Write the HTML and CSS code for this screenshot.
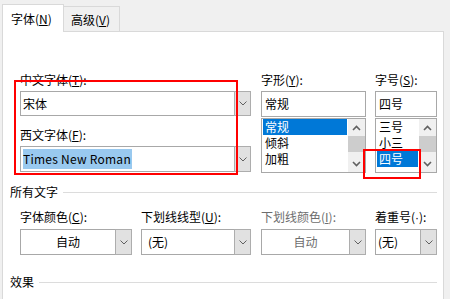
FILE: index.html
```html
<!DOCTYPE html>
<html lang="zh-CN">
<head>
<meta charset="utf-8">
<title>字体</title>
<link rel="stylesheet" href="styles.css">
</head>
<body>
<div class="tabs">
  <div class="tab active">字体(<u>N</u>)</div>
  <div class="tab second">高级(<u>V</u>)</div>
</div>
<div class="panel">
  <div class="font-row">
    <div class="col col-cn">
      <div class="label">中文字体(<u>T</u>):</div>
      <div class="combo">
        <div class="field">宋体</div>
        <div class="btn"><svg width="8" height="5" viewBox="0 0 8 5"><path d="M0.5 0.5 L4 4 L7.5 0.5" fill="none" stroke="#606060" stroke-width="1"/></svg></div>
      </div>
      <div class="label label-gap">西文字体(<u>F</u>):</div>
      <div class="combo combo-tall">
        <div class="field"><span class="hl">Times New Roman</span></div>
        <div class="btn"><svg width="8" height="5" viewBox="0 0 8 5"><path d="M0.5 0.5 L4 4 L7.5 0.5" fill="none" stroke="#606060" stroke-width="1"/></svg></div>
      </div>
    </div>
    <div class="col col-style">
      <div class="label">字形(<u>Y</u>):</div>
      <div class="textbox">常规</div>
      <div class="listbox">
        <div class="items">
          <div class="item selected">常规</div>
          <div class="item">倾斜</div>
          <div class="item">加粗</div>
        </div>
        <div class="scrollbar">
          <div class="sb-arrow"><svg width="9" height="6" viewBox="0 0 9 6"><path d="M1 5 L4.5 1.5 L8 5" fill="none" stroke="#606060" stroke-width="1.6"/></svg></div>
          <div class="sb-track"><div class="sb-thumb"></div></div>
          <div class="sb-arrow"><svg width="9" height="6" viewBox="0 0 9 6"><path d="M1 1 L4.5 4.5 L8 1" fill="none" stroke="#606060" stroke-width="1.6"/></svg></div>
        </div>
      </div>
    </div>
    <div class="col col-size">
      <div class="label">字号(<u>S</u>):</div>
      <div class="textbox">四号</div>
      <div class="listbox">
        <div class="items">
          <div class="item">三号</div>
          <div class="item">小三</div>
          <div class="item selected">四号</div>
        </div>
        <div class="scrollbar">
          <div class="sb-arrow"><svg width="9" height="6" viewBox="0 0 9 6"><path d="M1 5 L4.5 1.5 L8 5" fill="none" stroke="#606060" stroke-width="1.6"/></svg></div>
          <div class="sb-track"><div class="sb-thumb"></div></div>
          <div class="sb-arrow"><svg width="9" height="6" viewBox="0 0 9 6"><path d="M1 1 L4.5 4.5 L8 1" fill="none" stroke="#606060" stroke-width="1.6"/></svg></div>
        </div>
      </div>
    </div>
  </div>

  <div class="section"><span>所有文字</span><div class="rule"></div></div>

  <div class="field-row">
    <div class="col c1">
      <div class="label">字体颜色(<u>C</u>):</div>
      <div class="combo combo-row">
        <div class="field center">自动</div>
        <div class="btn"><svg width="8" height="5" viewBox="0 0 8 5"><path d="M0.5 0.5 L4 4 L7.5 0.5" fill="none" stroke="#606060" stroke-width="1"/></svg></div>
      </div>
    </div>
    <div class="col c2">
      <div class="label">下划线线型(<u>U</u>):</div>
      <div class="combo combo-row">
        <div class="field pad6">(无)</div>
        <div class="btn"><svg width="8" height="5" viewBox="0 0 8 5"><path d="M0.5 0.5 L4 4 L7.5 0.5" fill="none" stroke="#606060" stroke-width="1"/></svg></div>
      </div>
    </div>
    <div class="col c3 disabled">
      <div class="label">下划线颜色(<u>I</u>):</div>
      <div class="combo combo-row">
        <div class="field center">自动</div>
        <div class="btn"><svg width="8" height="5" viewBox="0 0 8 5"><path d="M0.5 0.5 L4 4 L7.5 0.5" fill="none" stroke="#606060" stroke-width="1"/></svg></div>
      </div>
    </div>
    <div class="col c4">
      <div class="label">着重号(<span class="latin">·</span>):</div>
      <div class="combo combo-row combo-c4">
        <div class="field">(无)</div>
        <div class="btn"><svg width="8" height="5" viewBox="0 0 8 5"><path d="M0.5 0.5 L4 4 L7.5 0.5" fill="none" stroke="#606060" stroke-width="1"/></svg></div>
      </div>
    </div>
  </div>

  <div class="section section-effects"><span>效果</span><div class="rule"></div></div>
</div>

<div class="mark mark-1"></div>
<div class="mark mark-2"></div>
</body>
</html>
```
FILE: styles.css
```css
html, body {
  margin: 0;
  padding: 0;
}
body {
  width: 450px;
  height: 299px;
  overflow: hidden;
  position: relative;
  background: #f0f0f0;
  font-family: "Noto Sans CJK SC", "Microsoft YaHei", sans-serif;
  font-size: 12px;
  line-height: 16px;
  color: #000;
}
u {
  text-decoration: underline;
  text-underline-offset: 1px;
}
.latin {
  font-family: "Liberation Sans", sans-serif;
}

/* tabs */
.tabs {
  display: flex;
  align-items: flex-end;
  height: 27px;
  padding: 4px 0 0 2px;
}
.tab {
  box-sizing: border-box;
  height: 25px;
  border: 1px solid #d9d9d9;
  border-bottom: none;
  background: #f0f0f0;
  display: flex;
  align-items: center;
  white-space: nowrap;
}
.tab.active {
  width: 62px;
  height: 28px;
  margin-bottom: -1px;
  padding-left: 8px;
  background: #fff;
  position: relative;
  z-index: 1;
}
.tab.second {
  width: 56px;
  border-left: none;
  padding-left: 7px;
  padding-top: 2px;
}

/* panel */
.panel {
  box-sizing: border-box;
  margin-left: 2px;
  width: 442px;
  height: 280px;
  background: #fff;
  border: 1px solid #d9d9d9;
  padding: 40px 6px 0 7px;
}

.label {
  height: 16px;
  white-space: nowrap;
}
.label-gap {
  margin-top: 11px;
}

/* combos */
.combo {
  display: flex;
  box-sizing: border-box;
  height: 25px;
  margin-top: 3px;
}
.combo-tall {
  height: 26px;
}
.combo-row {
  height: 26px;
  margin-top: 4px;
}
.field {
  flex: 1;
  min-width: 0;
  box-sizing: border-box;
  border: 1px solid #a8a8a8;
  border-right: none;
  background: #fff;
  display: flex;
  align-items: center;
  padding-left: 2px;
  white-space: nowrap;
}
.field.center {
  justify-content: center;
  padding-left: 0;
}
.field.pad6 {
  padding-left: 6px;
}
.btn {
  width: 17px;
  flex: none;
  box-sizing: border-box;
  border: 1px solid #adadad;
  background: #e1e1e1;
  display: flex;
  align-items: center;
  justify-content: center;
}
.hl {
  background: #99c9ef;
  padding: 2px 1px 2px 0;
  letter-spacing: 0.25px;
}

/* font row */
.font-row {
  display: flex;
  margin-left: 10px;
}
.col-cn {
  width: 231px;
  margin-right: 10px;
}
.col-style {
  width: 105px;
  margin-right: 9px;
}
.col-size {
  width: 62px;
}
.textbox {
  box-sizing: border-box;
  height: 26px;
  margin-top: 3px;
  border: 1px solid #a8a8a8;
  display: flex;
  align-items: center;
  padding-left: 3px;
}
.listbox {
  box-sizing: border-box;
  height: 55px;
  margin-top: 1px;
  border: 1px solid #a8a8a8;
  display: flex;
}
.items {
  flex: 1;
  padding: 0 1px;
}
.item {
  height: 16px;
  padding-left: 2px;
}
.item.selected {
  background: #0078d7;
  color: #fff;
}
.scrollbar {
  width: 17px;
  flex: none;
  background: #f0f0f0;
  display: flex;
  flex-direction: column;
}
.sb-arrow {
  height: 17px;
  display: flex;
  align-items: center;
  justify-content: center;
}
.sb-track {
  flex: 1;
}
.sb-thumb {
  height: 16px;
  background: #cdcdcd;
}

/* section headings */
.section {
  display: flex;
  align-items: center;
  height: 16px;
  margin-top: 11px;
}
.section .rule {
  flex: 1;
  height: 0;
  border-top: 1px solid #dcdcdc;
  margin-left: 5px;
}
.section-effects {
  margin-top: 19px;
}

/* second field row */
.field-row {
  display: flex;
  margin-left: 10px;
  margin-top: 9px;
}
.c1 { width: 112px; margin-right: 9px; }
.c2 { width: 110px; margin-right: 10px; }
.c3 { width: 105px; margin-right: 9px; }
.c4 { width: 62px; }
.disabled .label,
.disabled .field {
  color: #6d6d6d;
}

/* annotation marks */
.mark {
  position: absolute;
  box-sizing: border-box;
  border: 2px solid #f00;
}
.mark-1 {
  left: 14px;
  top: 80px;
  width: 224px;
  height: 95px;
}
.mark-2 {
  left: 363px;
  top: 149px;
  width: 58px;
  height: 30px;
}
```
